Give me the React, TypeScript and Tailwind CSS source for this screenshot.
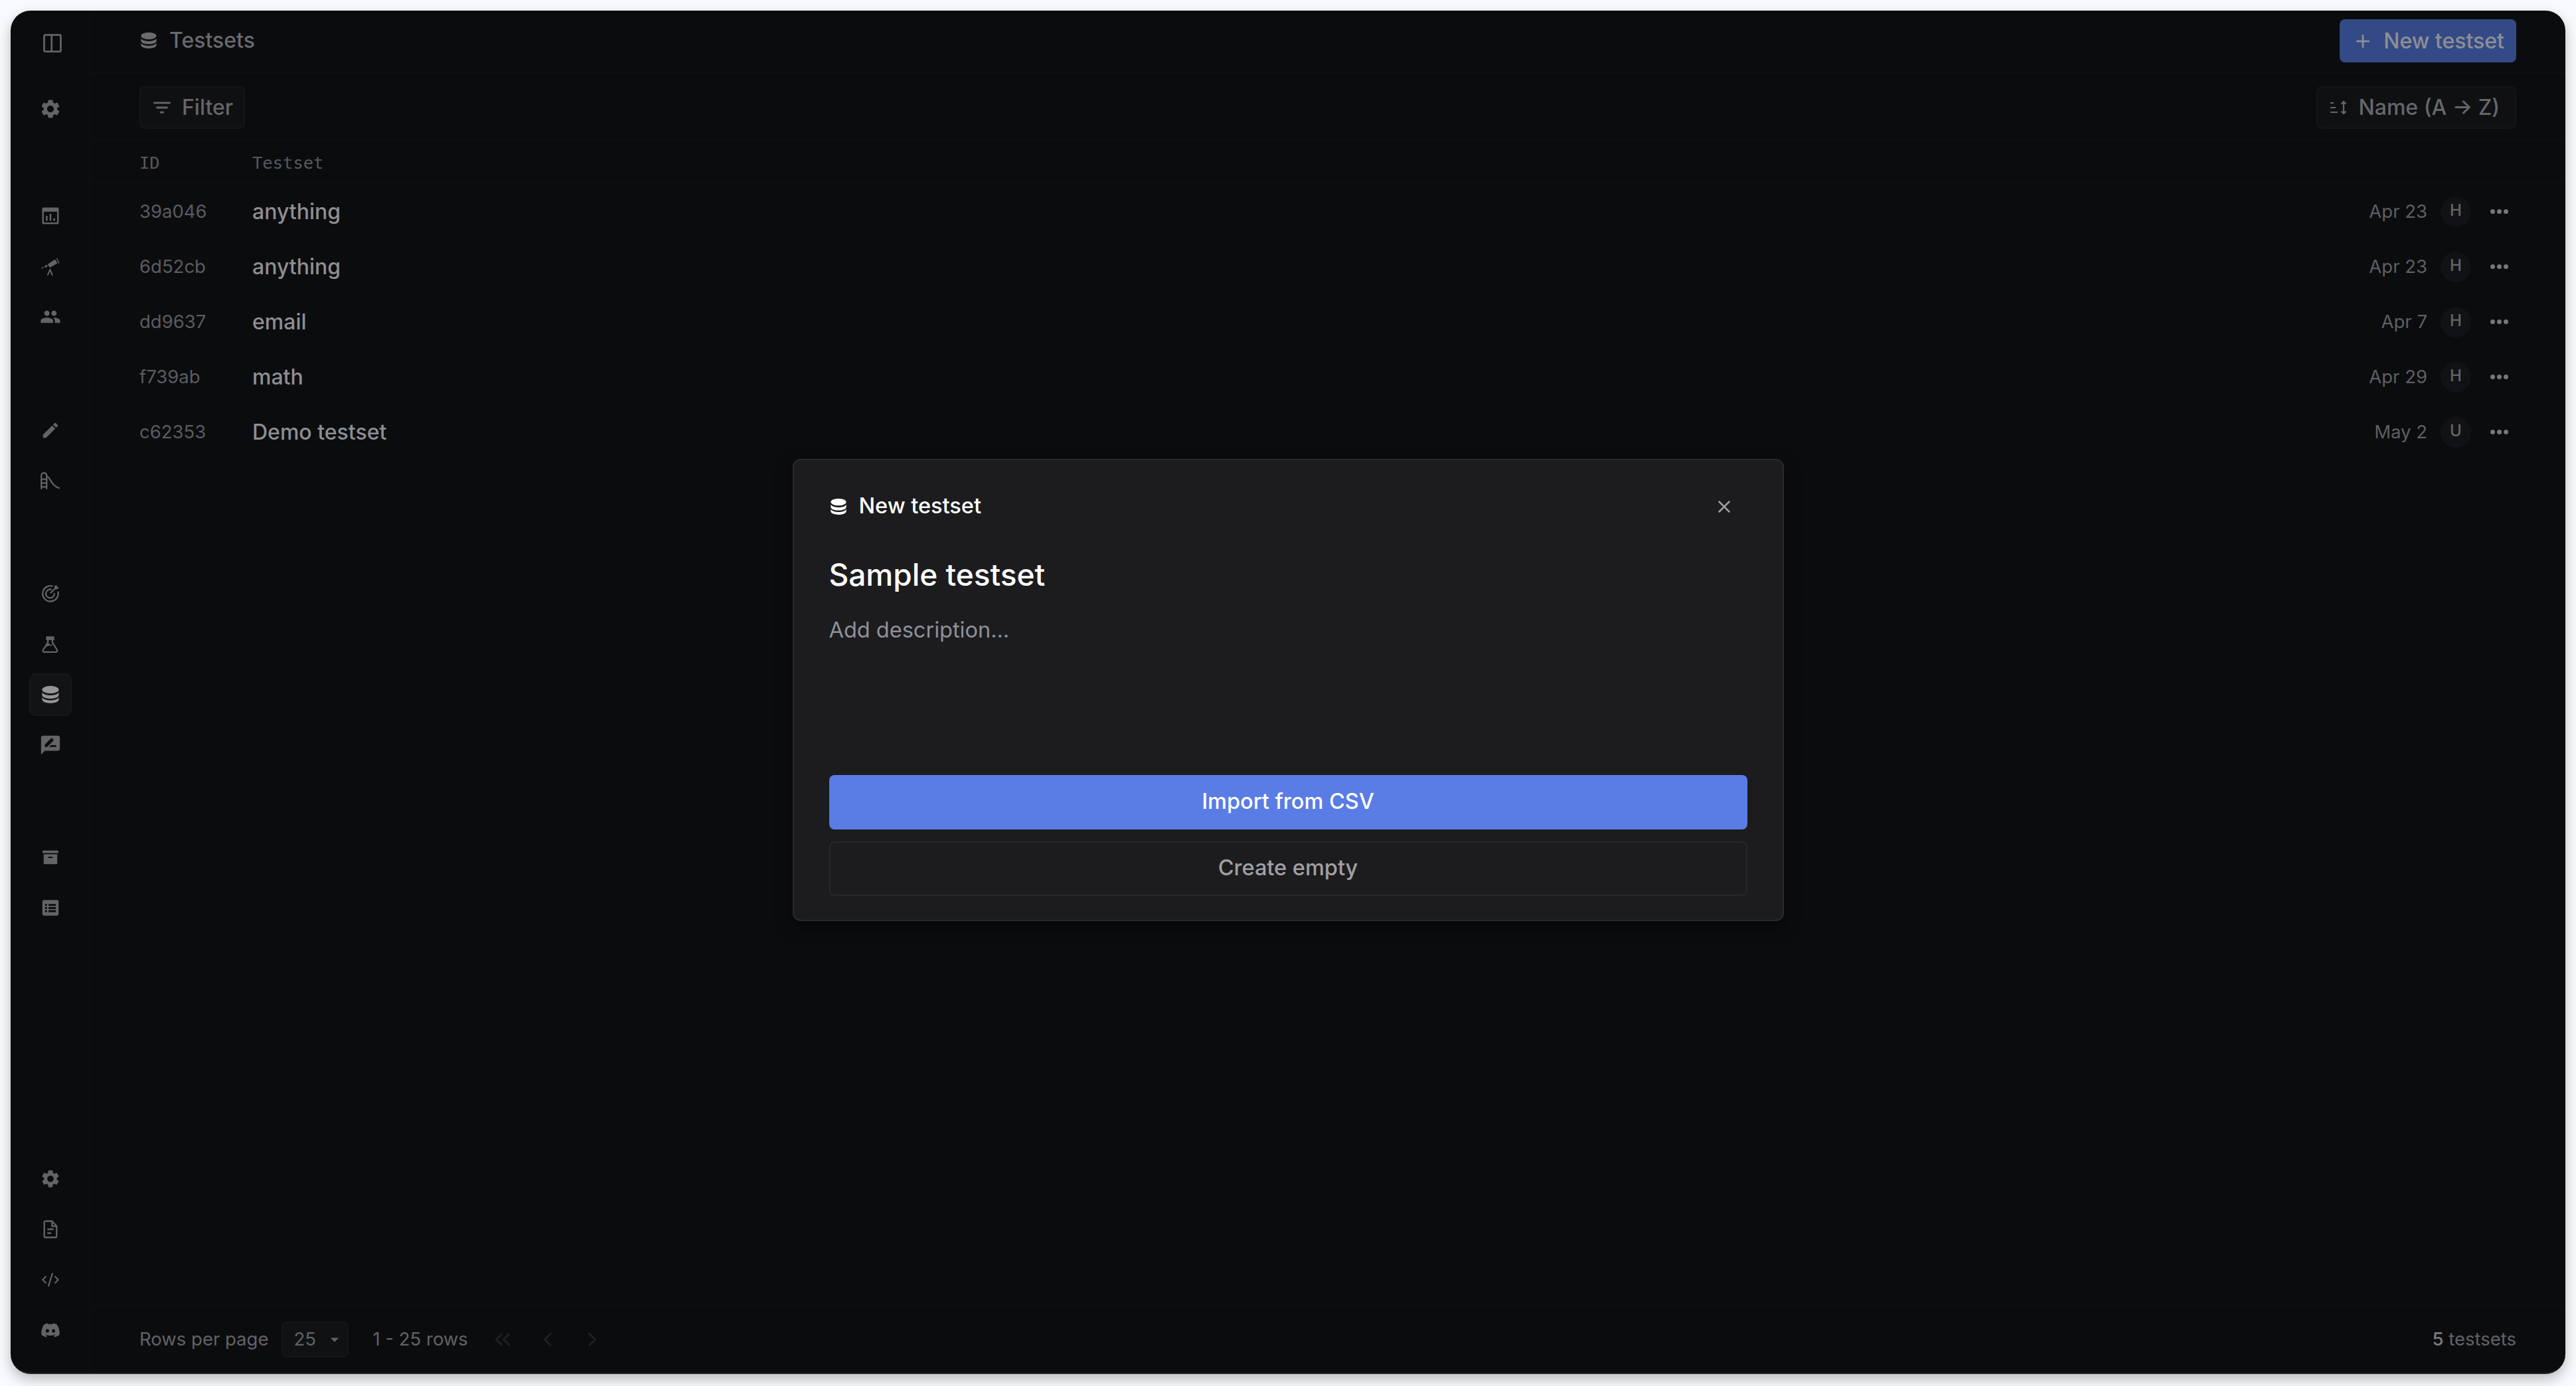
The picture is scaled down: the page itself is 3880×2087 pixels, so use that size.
import React from "react";
import { MdSettings, MdPeople, MdEdit, MdRateReview, MdFilterList, MdArrowDropDown } from "react-icons/md";
import { FaDiscord } from "react-icons/fa";
import { Plus, X, ChevronsLeft, ChevronLeft, ChevronRight, CodeXml } from "lucide-react";

const Db = ({ className }: { className?: string }) => (
  <svg viewBox="0 0 24 24" fill="currentColor" className={className}>
    <ellipse cx="12" cy="6" rx="10" ry="4.6" />
    <path d="M2 9.2C3.4 11.6 7.4 12.8 12 12.8s8.6-1.2 10-3.6v3.2c0 2.6-4.5 4.4-10 4.4S2 15 2 12.4z" />
    <path d="M2 15.2c1.4 2.4 5.4 3.6 10 3.6s8.6-1.2 10-3.6v2.6c0 2.7-4.5 4.4-10 4.4S2 20.500 2 17.800z" />
  </svg>
);
const Panel = ({ className }: { className?: string }) => (
  <svg viewBox="0 0 24 24" fill="none" stroke="currentColor" strokeWidth="2.200" className={className}>
    <rect x="2" y="2" width="20" height="20" rx="1.500" />
    <path d="M11 2v20" />
  </svg>
);
const Chart = ({ className }: { className?: string }) => (
  <svg viewBox="0 0 24 24" fill="currentColor" className={className}>
    <path d="M2 3.500A1.500 1.500 0 0 1 3.500 2h17A1.500 1.500 0 0 1 22 3.500v17a1.500 1.500 0 0 1-1.500 1.500h-17A1.500 1.500 0 0 1 2 20.500zM4 7v13h16V7z" fillRule="evenodd" />
    <rect x="6.500" y="12" width="2" height="6" /><rect x="11" y="9.500" width="2" height="8.500" /><rect x="15.500" y="15" width="2" height="3" />
  </svg>
);
const Telescope = ({ className }: { className?: string }) => (
  <svg viewBox="0 0 24 24" fill="currentColor" className={className}>
    <path d="M8.500 9.500l9-6 3 4.800-9.300 5.200z" />
    <path d="M20 2l2.800 6-1.200.6L19 2.600z" />
    <path d="M4.500 11.800l3-1.800 1.200 2-3 1.800z" />
    <path d="M1 14l2.500-1.500.5 1L1.500 15z" />
    <path d="M11.200 14.500l-3.600 8.500h1.700l2.100-5 2.100 5h1.800l-3.300-8z" />
  </svg>
);
const Slide = ({ className }: { className?: string }) => (
  <svg viewBox="0 0 28 24" fill="none" stroke="currentColor" strokeWidth="2" className={className}>
    <path d="M2 23V5a3.500 3.500 0 0 1 7 0v18M2 10h7M2 15h7M2 20h7" />
    <path d="M9 6c5 1 6 13 17 16" />
  </svg>
);
const Target = ({ className }: { className?: string }) => (
  <svg viewBox="0 0 24 24" fill="none" stroke="currentColor" strokeWidth="2" className={className}>
    <path d="M15 3.200A10 10 0 1 0 21.600 10" />
    <path d="M13.500 7.600A5.500 5.500 0 1 0 17 12" />
    <path d="M12 12l8-7.500" />
    <path d="M17 3l.5 3.500 3.500.5 2-2.500-2.500-.5-.5-2.500z" fill="currentColor" stroke="none" />
  </svg>
);
const Flask = ({ className }: { className?: string }) => (
  <svg viewBox="0 0 24 24" fill="none" stroke="currentColor" strokeWidth="2" className={className}>
    <path d="M7.500 2h9v3h-9z" fill="currentColor" />
    <path d="M9 5v4L2.500 19.500A1.700 1.700 0 0 0 4 22h16a1.700 1.700 0 0 0 1.500-2.500L15 9V5" />
    <path d="M6 15l4-4 3 2.500 2-1.500" fill="currentColor" strokeWidth="1.200" />
  </svg>
);
const Archive = ({ className }: { className?: string }) => (
  <svg viewBox="0 0 24 24" fill="currentColor" className={className}>
    <rect x="1" y="2.500" width="22" height="3.500" rx="0.800" />
    <path fillRule="evenodd" d="M2.500 7.500h19V20a1.500 1.500 0 0 1-1.500 1.500H4A1.500 1.500 0 0 1 2.500 20zM9 11v2h6v-2z" />
  </svg>
);
const ListBox = ({ className }: { className?: string }) => (
  <svg viewBox="0 0 24 24" fill="currentColor" className={className}>
    <path fillRule="evenodd" d="M3.500 2h17A2 2 0 0 1 22.500 4v16a2 2 0 0 1-2 2h-17a2 2 0 0 1-2-2V4a2 2 0 0 1 2-2zM5 7v2.500h2.500V7zm4.500 0v2.500h9.500V7zM5 11v2.500h2.500V11zm4.500 0v2.500h9.500V11zM5 15v2.500h2.500V15zm4.500 0v2.500h9.500V15z" />
  </svg>
);
const Doc = ({ className }: { className?: string }) => (
  <svg viewBox="0 0 20 24" fill="none" stroke="currentColor" strokeWidth="2" className={className}>
    <path d="M4 1.500h8L18 8v13a1.500 1.500 0 0 1-1.500 1.500h-13A1.500 1.500 0 0 1 2 21V3a1.500 1.500 0 0 1 2-1.500z" />
    <path d="M12 1.500V8h6" />
    <path d="M6 12h8M6 17h5" strokeWidth="2.200" />
  </svg>
);
const SortIcon = ({ className }: { className?: string }) => (
  <svg viewBox="0 0 28 24" fill="none" stroke="currentColor" strokeWidth="2.200" className={className}>
    <path d="M1 5h5M1 12h8M1 19h11" />
    <path d="M21 3v18M17.500 6.500L21 3l3.500 3.500M17.500 17.500L21 21l3.500-3.500" />
  </svg>
);

const NavItem = ({ children, active }: { children: React.ReactNode; active?: boolean }) => (
  <div className={`flex h-[64px] w-[64px] items-center justify-center rounded-[10px] ${active ? "border-2 border-[#17181a] bg-[#121315] text-[#959598]" : "text-[#636368]"}`}>
    {children}
  </div>
);

const rows = [
  ["39a046", "anything", "Apr 23", "H"],
  ["6d52cb", "anything", "Apr 23", "H"],
  ["dd9637", "email", "Apr 7", "H"],
  ["f739ab", "math", "Apr 29", "H"],
  ["c62353", "Demo testset", "May 2", "U"],
];

export default function App() {
  return (
    <div className="flex h-screen flex-col bg-[#f9fafd] pb-[18px] pl-4 pr-4 pt-4 font-['Inter',sans-serif]">
      <div className="relative flex flex-1 overflow-hidden rounded-[30px] border-b-2 border-[#25262a] bg-[#0b0c0e] shadow-[0_8px_20px_rgba(0,0,0,0.25)]">
        <aside className="flex w-[120px] shrink-0 flex-col items-center border-r border-[#101113] pb-[32px] pl-[2px] pr-[2px] pt-[17px]">
          <div className="flex flex-col gap-[35px]">
            <NavItem><Panel className="ml-[6px] h-[30px] w-[30px]" /></NavItem>
            <NavItem><MdSettings className="h-[34px] w-[34px]" /></NavItem>
          </div>
          <div className="mt-[97px] flex flex-col gap-[12px]">
            <NavItem><Chart className="h-[30px] w-[30px]" /></NavItem>
            <NavItem><Telescope className="h-[30px] w-[30px]" /></NavItem>
            <NavItem><MdPeople className="h-[32px] w-[32px]" /></NavItem>
          </div>
          <div className="mt-[107px] flex flex-col gap-[12px]">
            <NavItem><MdEdit className="h-[30px] w-[30px]" /></NavItem>
            <NavItem><Slide className="h-[28px] w-[32px]" /></NavItem>
          </div>
          <div className="mt-[106px] flex flex-col gap-[12px]">
            <NavItem><Target className="mb-[3px] h-[28px] w-[28px]" /></NavItem>
            <NavItem><Flask className="h-[27px] w-[27px]" /></NavItem>
            <NavItem active><Db className="h-[30px] w-[30px]" /></NavItem>
            <NavItem><MdRateReview className="h-[34px] w-[34px]" /></NavItem>
          </div>
          <div className="mt-[105px] flex flex-col gap-[12px]">
            <NavItem><Archive className="h-[26px] w-[26px]" /></NavItem>
            <NavItem><ListBox className="h-[28px] w-[28px]" /></NavItem>
          </div>
          <div className="mt-auto flex flex-col gap-[12px]">
            <NavItem><MdSettings className="h-[32px] w-[32px]" /></NavItem>
            <NavItem><Doc className="h-[28px] w-[24px]" /></NavItem>
            <NavItem><CodeXml className="h-[28px] w-[28px]" strokeWidth={1.8} /></NavItem>
            <NavItem><FaDiscord className="h-[30px] w-[30px]" /></NavItem>
          </div>
        </aside>

        <main className="flex min-w-0 flex-1 flex-col">
          <header className="flex h-[94px] items-center justify-between border-b border-[#101113] pl-[74px] pr-[74px]">
            <div className="mt-[-4px] flex items-center gap-[17px] text-[#6a6a6f]">
              <Db className="h-[28px] w-[28px]" />
              <span className="text-[32px] font-medium">Testsets</span>
            </div>
            <button className="mt-[-2px] flex h-[65px] items-center gap-[16px] rounded-[8px] bg-[#344a86] pl-[20px] pr-[18px] text-[#8e8f93]">
              <Plus className="h-[30px] w-[30px]" strokeWidth={2.2} />
              <span className="text-[32px] font-medium">New testset</span>
            </button>
          </header>

          <div className="flex h-[101px] items-center justify-between border-b border-[#101113] pl-[74px] pr-[74px] pt-[4px]">
            <button className="flex h-[64px] items-center gap-[13px] rounded-[8px] border-2 border-[#15161a] bg-[#0f1012] pl-[15px] pr-[16px] text-[#66666b]">
              <MdFilterList className="h-[34px] w-[34px]" />
              <span className="text-[32px] font-medium">Filter</span>
            </button>
            <button className="flex h-[64px] items-center gap-[16px] rounded-[8px] border-2 border-[#15161a] bg-[#0f1012] pl-[18px] pr-[23px] text-[#66666b]">
              <SortIcon className="h-[24px] w-[28px]" />
              <span className="text-[32px] font-medium">Name (A → Z)</span>
            </button>
          </div>

          <div className="flex h-[66px] items-center border-b border-[#101113] pl-[74px] pr-[74px] pt-[3px] font-['DejaVu_Sans_Mono',monospace] text-[25.5px] text-[#58585d]">
            <span className="w-[170px]">ID</span>
            <span>Testset</span>
          </div>

          {rows.map((r, i) => (
            <div key={i} className="flex h-[83px] items-center pl-[74px] pr-[74px]">
              <span className="w-[170px] text-[27.5px] text-[#5b5b60]">{r[0]}</span>
              <span className="text-[32px] font-medium text-[#8e8e92]">{r[1]}</span>
              <span className="ml-auto text-[27.5px] text-[#5f5f63]">{r[2]}</span>
              <span className="ml-[20px] flex h-[46px] w-[46px] items-center justify-center rounded-full bg-[#111215] pb-[3px] text-[24px] font-medium text-[#66666a]">{r[3]}</span>
              <span className="ml-[29px] mr-[12px] flex gap-[3px]">
                <i className="block h-[7px] w-[7px] rounded-full bg-[#77777b]" />
                <i className="block h-[7px] w-[7px] rounded-full bg-[#77777b]" />
                <i className="block h-[7px] w-[7px] rounded-full bg-[#77777b]" />
              </span>
            </div>
          ))}

          <footer className="mt-auto flex h-[101px] items-center border-t border-[#101113] pl-[74px] pr-[74px] text-[27.5px] text-[#626267]">
            <span>Rows per page</span>
            <span className="ml-[20px] flex h-[54px] w-[101px] items-center justify-between rounded-[8px] border-2 border-[#15161a] bg-[#101113] pl-[16px] pr-[4px]">
              25
              <MdArrowDropDown className="h-[30px] w-[30px]" />
            </span>
            <span className="ml-[36px]">1 - 25 rows</span>
            <span className="ml-[33px] flex items-center gap-[31px] text-[#1f2023]">
              <ChevronsLeft className="h-[38px] w-[38px]" />
              <ChevronLeft className="h-[36px] w-[36px]" />
              <ChevronRight className="h-[36px] w-[36px]" />
            </span>
            <span className="ml-auto"><span className="font-medium text-[#7b7b7f]">5</span> testsets</span>
          </footer>
        </main>

        <div className="absolute inset-0 flex items-center justify-center pb-[6px]">
          <div className="flex h-[696px] w-[1493px] flex-col rounded-[12px] border-2 border-[#2a2a2c] bg-[#1c1c1e] pb-[36px] pl-[53px] pr-[53px] pt-[54px] shadow-[0_8px_24px_rgba(0,0,0,0.5)]">
            <div className="flex h-[32px] items-center text-white">
              <Db className="h-[30px] w-[28px]" />
              <span className="ml-[17px] text-[32.5px] font-medium">New testset</span>
              <X className="ml-auto mr-[20px] h-[30px] w-[30px] text-[#a0a0a6]" strokeWidth={2} />
            </div>
            <h2 className="mt-[56px] text-[46px] font-medium leading-[60px] text-white">Sample testset</h2>
            <p className="mt-[34px] text-[32.5px] leading-[40px] text-[#8f9099]">Add description...</p>
            <div className="mt-auto flex flex-col gap-[18px]">
              <button className="h-[82px] rounded-[8px] bg-[#5a7ce5] text-[32.5px] font-medium text-white">Import from CSV</button>
              <button className="h-[82px] rounded-[8px] border-2 border-[#28282b] text-[32.5px] font-medium text-[#a0a0a6]">Create empty</button>
            </div>
          </div>
        </div>
      </div>
    </div>
  );
}
